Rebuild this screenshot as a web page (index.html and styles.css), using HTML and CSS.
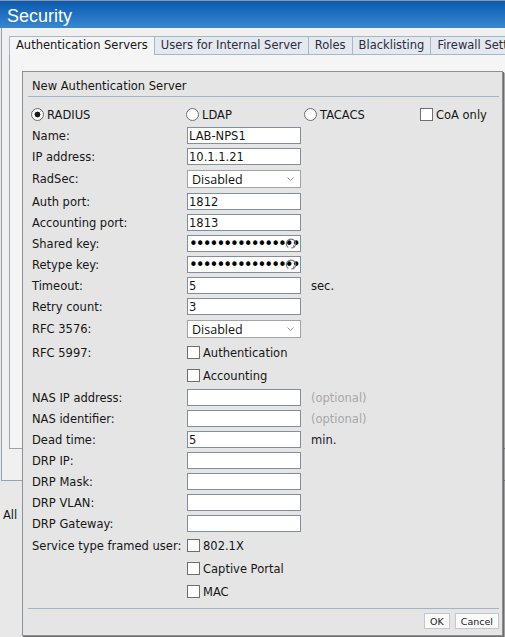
FILE: index.html
```html
<!DOCTYPE html>
<html lang="en">
<head>
  <meta charset="UTF-8">
  <meta name="viewport" content="width=device-width, initial-scale=1.0">
  <title>Security</title>
  <link rel="stylesheet" href="styles.css">
</head>
<body>
  <header class="titlebar">Security</header>

  <div class="workspace">
    <nav class="tabs">
      <div class="tab active">Authentication Servers</div>
      <div class="tab">Users for Internal Server</div>
      <div class="tab">Roles</div>
      <div class="tab">Blacklisting</div>
      <div class="tab">Firewall Settings</div>
    </nav>
    <div class="tab-panel"></div>
  </div>
  <div class="list-filter">All</div>

  <div class="dialog">
    <div class="dialog-title">New Authentication Server</div>
    <div class="rule"></div>

    <div class="server-type">
      <label class="type-option radius"><input type="radio" name="type" checked>RADIUS</label>
      <label class="type-option ldap"><input type="radio" name="type">LDAP</label>
      <label class="type-option tacacs"><input type="radio" name="type">TACACS</label>
      <label class="type-option"><input type="checkbox">CoA only</label>
    </div>

    <div class="form">
      <div class="row"><span>Name:</span><input type="text" value="LAB-NPS1"></div>
      <div class="row"><span>IP address:</span><input type="text" value="10.1.1.21"></div>
      <div class="row tall">
        <span>RadSec:</span>
        <span class="select-wrap">
          <select><option>Disabled</option></select>
          <svg class="chevron" width="7" height="4" viewBox="0 0 7 4"><path d="M0.5 0.5 L3.5 3.5 L6.5 0.5" fill="none" stroke="#8d8d8d"/></svg>
        </span>
      </div>
      <div class="row"><span>Auth port:</span><input type="text" value="1812"></div>
      <div class="row"><span>Accounting port:</span><input type="text" value="1813"></div>
      <div class="row">
        <span>Shared key:</span>
        <span class="key-wrap">
          <input type="password" value="xxxxxxxxxxxxxxxxxx">
          <svg class="reveal" width="12" height="13" viewBox="0 0 12 13"><path d="M3.3 10.6 A4.7 4.7 0 1 1 8.7 10.6" fill="none" stroke="#747474" stroke-width="1.2"/><path d="M8.7 10.6 L8.6 8.2 M8.7 10.6 L6.4 10.9" fill="none" stroke="#747474" stroke-width="1.1"/></svg>
        </span>
      </div>
      <div class="row">
        <span>Retype key:</span>
        <span class="key-wrap">
          <input type="password" value="xxxxxxxxxxxxxxxxxx">
          <svg class="reveal" width="12" height="13" viewBox="0 0 12 13"><path d="M3.3 10.6 A4.7 4.7 0 1 1 8.7 10.6" fill="none" stroke="#747474" stroke-width="1.2"/><path d="M8.7 10.6 L8.6 8.2 M8.7 10.6 L6.4 10.9" fill="none" stroke="#747474" stroke-width="1.1"/></svg>
        </span>
      </div>
      <div class="row"><span>Timeout:</span><input type="text" value="5"><span class="unit">sec.</span></div>
      <div class="row"><span>Retry count:</span><input type="text" value="3"></div>
      <div class="row tall">
        <span>RFC 3576:</span>
        <span class="select-wrap">
          <select><option>Disabled</option></select>
          <svg class="chevron" width="7" height="4" viewBox="0 0 7 4"><path d="M0.5 0.5 L3.5 3.5 L6.5 0.5" fill="none" stroke="#8d8d8d"/></svg>
        </span>
      </div>
      <div class="row check"><span>RFC 5997:</span><label class="check-item"><input type="checkbox">Authentication</label></div>
      <div class="row check"><span></span><label class="check-item"><input type="checkbox">Accounting</label></div>
      <div class="row"><span>NAS IP address:</span><input type="text"><span class="hint">(optional)</span></div>
      <div class="row"><span>NAS identifier:</span><input type="text"><span class="hint">(optional)</span></div>
      <div class="row"><span>Dead time:</span><input type="text" value="5"><span class="unit">min.</span></div>
      <div class="row"><span>DRP IP:</span><input type="text"></div>
      <div class="row"><span>DRP Mask:</span><input type="text"></div>
      <div class="row"><span>DRP VLAN:</span><input type="text"></div>
      <div class="row"><span>DRP Gateway:</span><input type="text"></div>
      <div class="row check"><span>Service type framed user:</span><label class="check-item"><input type="checkbox">802.1X</label></div>
      <div class="row check"><span></span><label class="check-item"><input type="checkbox">Captive Portal</label></div>
      <div class="row check"><span></span><label class="check-item"><input type="checkbox">MAC</label></div>
    </div>

    <div class="rule footer-rule"></div>
    <div class="buttons">
      <button>OK</button>
      <button>Cancel</button>
    </div>
  </div>
</body>
</html>
```

FILE: styles.css
```css
* {
  box-sizing: border-box;
}

body {
  margin: 0;
  width: 505px;
  height: 637px;
  overflow: hidden;
  position: relative;
  background: #e8e8e8;
  font-family: 'DejaVu Sans', Verdana, sans-serif;
  font-size: 11.5px;
  color: #161616;
}

.titlebar {
  height: 28px;
  border-top: 1px solid #8d98a3;
  background: linear-gradient(#0b5ab0, #3887d0);
  color: #fff;
  font-family: 'Liberation Sans', Arial, sans-serif;
  font-size: 18px;
  line-height: 24px;
  padding: 3px 0 0 7px;
}

.workspace {
  margin-left: 1px;
  height: 453px;
  border-left: 1px solid #98a3ad;
  border-bottom: 1px solid #98a3ad;
  background: #f0f0f0;
  padding: 8px 0 0 7px;
  overflow: hidden;
}

.tabs {
  display: flex;
  height: 19px;
  white-space: nowrap;
}

.tab {
  height: 19px;
  padding: 0 6px;
  border: 1px solid #a5b7c8;
  border-left: none;
  background: #e3e9ef;
  color: #2e2b3c;
  line-height: 17px;
  flex-shrink: 0;
}

.tab.active {
  border-left: 1px solid #a5b7c8;
  border-bottom: none;
  background: #f5f5f5;
  color: #161616;
}

.tab-panel {
  height: 394px;
  border-left: 1px solid #98a3ad;
  border-bottom: 1px solid #98a3ad;
  background: #f5f5f5;
}

.list-filter {
  padding: 27px 0 0 3px;
  line-height: 14px;
}

/* dialog floats over the list */
.dialog {
  position: absolute;
  left: 22px;
  top: 71px;
  width: 481px;
  border: 1px solid #8b9096;
  background: #e5e5e5;
  box-shadow: 1px 1px 0 #6c6c6c, 2px 2px 1px rgba(0, 0, 0, 0.3);
}

.dialog-title {
  padding: 7px 0 0 9px;
  line-height: 14px;
}

.rule {
  height: 1px;
  background: #9fb5c9;
  margin: 3px 3px 0 5px;
}

.server-type {
  display: flex;
  align-items: center;
  height: 21px;
  margin-top: 7px;
  padding-left: 8px;
}

.type-option {
  display: flex;
  align-items: center;
  gap: 3px;
}

.type-option.radius {
  width: 155px;
}

.type-option.ldap {
  width: 118px;
}

.type-option.tacacs {
  width: 116px;
}

input[type=radio] {
  appearance: none;
  width: 13px;
  height: 13px;
  margin: 0;
  border: 1px solid #6e6e6e;
  border-radius: 50%;
  background: #fff;
}

input[type=radio]:checked {
  background: radial-gradient(circle, #1a1a1a 0 2.6px, #fff 3.2px);
}

input[type=checkbox] {
  appearance: none;
  width: 13px;
  height: 13px;
  margin: 0;
  border: 1px solid #6f6f6f;
  background: #fff;
  flex-shrink: 0;
}

.form {
  padding-left: 9px;
}

.row {
  display: grid;
  grid-template-columns: 155px 124px auto;
  align-items: center;
  height: 21px;
}

.row.tall {
  height: 24px;
}

.row.check {
  height: 23px;
}

input[type=text],
input[type=password] {
  width: 114px;
  height: 17px;
  margin: 0;
  padding: 0 1px;
  border: 1px solid #7f8fa0;
  background: #fff;
  font: inherit;
  color: #161616;
  outline: none;
}

input[type=password] {
  font-size: 15px;
  letter-spacing: -2px;
  color: #000;
}

.key-wrap,
.select-wrap {
  position: relative;
  width: 114px;
  display: flex;
}

.reveal {
  position: absolute;
  right: 4px;
  top: 2px;
}

select {
  appearance: none;
  width: 114px;
  height: 18px;
  margin: 0;
  padding: 0 0 0 4px;
  border: 1px solid #a4a4a4;
  border-radius: 0;
  background: #fff;
  font-family: 'Open Sans', sans-serif;
  font-size: 12.5px;
  color: #111;
}

.chevron {
  position: absolute;
  right: 7px;
  top: 7px;
}

.unit {
  color: #161616;
}

.hint {
  color: #a8a8a8;
}

.check-item {
  display: flex;
  align-items: center;
  gap: 3px;
}

.footer-rule {
  margin-top: 5px;
}

.buttons {
  display: flex;
  justify-content: flex-end;
  gap: 5px;
  margin: 4px 3px 0 0;
  padding-bottom: 6px;
}

button {
  height: 16px;
  margin: 0;
  padding: 0 5px;
  border: 1px solid #c6c6c6;
  background: #fbfbfb;
  font-family: 'DejaVu Sans', Verdana, sans-serif;
  font-size: 9.5px;
  color: #222;
}
```
